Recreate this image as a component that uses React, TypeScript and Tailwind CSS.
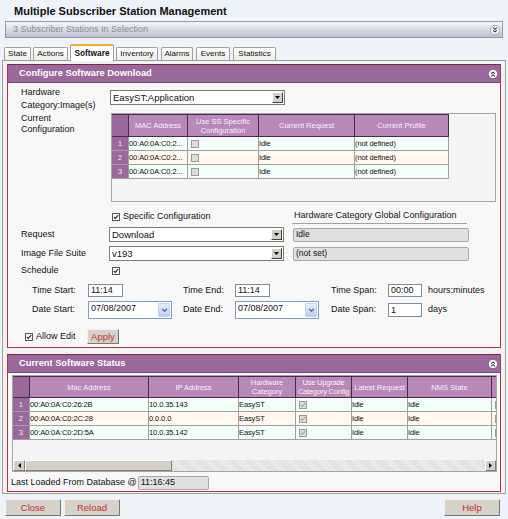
import React from 'react';

function Collapse({ down }: { down?: boolean }) {
  return (
    <svg viewBox="0 0 10 10" className="h-[10px] w-[10px] shrink-0">
      <circle cx="5" cy="5" r="4.6" fill={down ? '#f4f4f8' : '#fff'} stroke={down ? '#8a8a9a' : '#6a4a6a'} strokeWidth="0.6" />
      <path
        d={down ? 'M3.1 2.7 L5 4.3 L6.9 2.7 M3.1 5.3 L5 6.9 L6.9 5.3' : 'M3.1 4.7 L5 3.1 L6.9 4.7 M3.1 7.3 L5 5.7 L6.9 7.3'}
        fill="none"
        stroke="#333"
        strokeWidth="1.1"
      />
    </svg>
  );
}

function Check({ checked, disabled }: { checked?: boolean; disabled?: boolean }) {
  return (
    <span
      className={`flex h-[8px] w-[8px] shrink-0 items-center justify-center border ${
        disabled ? 'border-[#9a9a9a] bg-[#dcdcdc]' : 'border-[#555] bg-white'
      }`}
    >
      {checked && (
        <svg viewBox="0 0 8 8" className="h-[6px] w-[6px]">
          <path d="M1 3.8 L3 6 L7 1.6" fill="none" stroke={disabled ? '#a4a4a4' : '#222'} strokeWidth="1.5" />
        </svg>
      )}
    </span>
  );
}

function Select({ value, className }: { value: string; className: string }) {
  return (
    <div className={`flex items-center justify-between border border-[#7a7a7a] bg-white pl-[2px] ${className}`}>
      <span className="text-[9.5px] leading-none">{value}</span>
      <span className="mr-[1px] flex h-[11px] w-[11px] items-center justify-center border border-t-white border-l-white border-b-[#404040] border-r-[#404040] bg-[#d4d0c8]">
        <svg viewBox="0 0 5 3" className="h-[3px] w-[5px]">
          <path d="M0 0h5L2.5 3z" fill="#000" />
        </svg>
      </span>
    </div>
  );
}

function ReadOnly({ value, className }: { value: string; className: string }) {
  return (
    <div className={`flex items-center rounded-[2px] border border-[#a8a8a8] bg-[#e0e0e0] pl-[2px] leading-none ${className}`}>
      {value}
    </div>
  );
}

function Input({ value, className }: { value: string; className: string }) {
  return (
    <div className={`flex items-center border border-[#7f8c9c] bg-white pl-[2px] text-[9px] leading-none ${className}`}>
      {value}
    </div>
  );
}

function DateCombo({ value }: { value: string }) {
  return (
    <div className="flex h-[18px] w-[84px] justify-between border border-[#7f9db9] bg-white pl-[2px]">
      <span className="pt-[2px] text-[9px] leading-none">{value}</span>
      <span className="m-[1px] flex w-[12px] items-center justify-center rounded-[1px] border border-[#c0d0f0] bg-gradient-to-b from-[#e4eefd] to-[#b8cdf4]">
        <svg viewBox="0 0 8 5" className="h-[4px] w-[7px]">
          <path d="M1 1 L4 4 L7 1" fill="none" stroke="#4d6185" strokeWidth="1.5" />
        </svg>
      </span>
    </div>
  );
}

function Button({ label, className }: { label: string; className: string }) {
  return (
    <div
      className={`flex items-center justify-center border border-t-[#f4f2ee] border-l-[#f4f2ee] border-b-[#7a7670] border-r-[#7a7670] bg-[#d6d2ca] text-[9.5px] leading-none text-[#c0302c] ${className}`}
    >
      {label}
    </div>
  );
}

function SectionHeader({ title }: { title: string }) {
  return (
    <div className="flex h-[18px] shrink-0 items-center justify-between border-b border-[#7a4a7a] bg-[#9a689a] pl-[11px] pr-[2px]">
      <span className="text-[9.3px] font-bold leading-none text-white">{title}</span>
      <Collapse />
    </div>
  );
}

const rowBg = ['bg-[#f2fff8]', 'bg-[#fff8ee]', 'bg-[#f2fff8]'];

function Th({ className, children }: { className: string; children: React.ReactNode }) {
  return (
    <div className={`flex shrink-0 items-center justify-center overflow-hidden whitespace-nowrap border-l border-[#4a2a4a] bg-[#b888b8] text-center text-[7.5px] leading-[9px] text-[#fbeefb] ${className}`}>
      {children}
    </div>
  );
}

function Td({ className, children }: { className: string; children?: React.ReactNode }) {
  return (
    <div className={`flex shrink-0 items-center overflow-hidden whitespace-nowrap border-l border-[#a0a0a0] text-[7.5px] leading-none tracking-[-0.1px] ${className}`}>
      {children}
    </div>
  );
}

function NumCell({ n }: { n: number }) {
  return (
    <div className="flex w-[16px] shrink-0 items-center justify-center bg-[#9a689a] text-[8px] leading-none text-[#f4e4f4]">{n}</div>
  );
}

function ConfigTable() {
  const rows = [1, 2, 3];
  return (
    <div className="h-[89px] w-[385px] border border-[#a4a4a4] bg-[#f4f4f4]">
      <div className="w-[337px]">
        <div className="flex h-[23px] border-t border-b border-[#4a2a4a]">
          <div className="w-[16px] shrink-0 bg-[#9a689a]" />
          <Th className="w-[59px]">MAC Address</Th>
          <Th className="w-[71px]">Use SS Specific<br />Configuration</Th>
          <Th className="w-[96px]">Current Request</Th>
          <Th className="w-[95px] border-r">Current Profile</Th>
        </div>
        {rows.map((n, i) => (
          <div key={n} className={`flex h-[14px] border-b border-[#a0a0a0] ${rowBg[i]}`}>
            <NumCell n={n} />
            <Td className="w-[59px] border-[#4a2a4a]">00:A0:0A:C0:2...</Td>
            <Td className="w-[71px] pl-[3px]"><Check disabled /></Td>
            <Td className="w-[96px]">Idle</Td>
            <Td className="w-[95px] border-r">(not defined)</Td>
          </div>
        ))}
      </div>
    </div>
  );
}

function StatusTable() {
  const rows = [
    ['00:A0:0A:C0:26:2B', '10.0.35.143'],
    ['00:A0:0A:C0:2C:28', '0.0.0.0'],
    ['00:A0:0A:C0:2D:5A', '10.0.35.142'],
  ];
  return (
    <div className="ml-[4px] flex h-[97px] w-[485px] flex-col overflow-hidden border border-[#a4a4a4] bg-[#f4f4f4]">
      <div className="w-[518px]">
        <div className="flex h-[22px] border-t border-b border-[#4a2a4a]">
          <div className="w-[16px] shrink-0 bg-[#9a689a]" />
          <Th className="w-[119px]">Mac Address</Th>
          <Th className="w-[90px]">IP Address</Th>
          <Th className="w-[57px]">Hardware<br />Category</Th>
          <Th className="w-[56px] tracking-[-0.2px]">Use Upgrade<br />Category Config</Th>
          <Th className="w-[56px]">Latest Request</Th>
          <Th className="w-[84px]">NMS State</Th>
          <Th className="w-[40px]">{' '}</Th>
        </div>
        {rows.map(([mac, ip], i) => (
          <div key={mac} className={`flex h-[14px] border-b border-[#a0a0a0] ${rowBg[i]}`}>
            <NumCell n={i + 1} />
            <Td className="w-[119px] border-[#4a2a4a]">{mac}</Td>
            <Td className="w-[90px]">{ip}</Td>
            <Td className="w-[57px]">EasyST</Td>
            <Td className="w-[56px] pl-[3px]"><Check checked disabled /></Td>
            <Td className="w-[56px]">Idle</Td>
            <Td className="w-[84px]">Idle</Td>
            <Td className="w-[40px] pl-[3px]"><Check disabled /></Td>
          </div>
        ))}
      </div>
      <div className="flex-1" />
      <div className="flex h-[11px] shrink-0 bg-[#e6e6e6]">
        <div className="flex w-[12px] items-center justify-center border border-t-white border-l-white border-b-[#808080] border-r-[#808080] bg-[#d4d0c8]">
          <svg viewBox="0 0 3 5" className="h-[5px] w-[3px]"><path d="M3 0v5L0 2.5z" fill="#000" /></svg>
        </div>
        <div className="w-[147px] border border-t-white border-l-white border-b-[#808080] border-r-[#808080] bg-[#d4d0c8]" />
        <div className="flex-1 bg-[repeating-linear-gradient(45deg,#dcdcdc_0px,#dcdcdc_1px,#efefef_1px,#efefef_2px)]" />
        <div className="flex w-[11px] items-center justify-center border border-t-white border-l-white border-b-[#808080] border-r-[#808080] bg-[#d4d0c8]">
          <svg viewBox="0 0 3 5" className="h-[5px] w-[3px]"><path d="M0 0v5L3 2.5z" fill="#000" /></svg>
        </div>
      </div>
    </div>
  );
}

const tabs: [string, string][] = [
  ['State', 'w-[27px]'],
  ['Actions', 'ml-[2px] w-[35px]'],
  ['Software', 'ml-[2px] w-[44px]'],
  ['Inventory', 'ml-[2px] w-[42px]'],
  ['Alarms', 'ml-[3px] w-[32px]'],
  ['Events', 'ml-[3px] w-[34px]'],
  ['Statistics', 'ml-[3px] w-[43px]'],
];

export default function App() {
  return (
    <div className="flex h-[519px] w-[508px] flex-col overflow-hidden bg-[#eef3f9] font-['Liberation_Sans',Arial,sans-serif] text-[#111]">
      <div className="h-[21px] shrink-0 pl-[14px] pt-[5px] text-[11px] font-bold leading-[12px]">
        Multiple Subscriber Station Management
      </div>
      <div className="mx-[5px] flex h-[17px] shrink-0 items-center justify-between border border-[#9898a8] bg-gradient-to-b from-[#f6f6fa] to-[#bebed0] pl-[7px] pr-[2px]">
        <span className="text-[9px] leading-none text-[#8a8a8a]">3 Subscriber Stations In Selection</span>
        <Collapse down />
      </div>

      <div className="mt-[6px] flex h-[16px] shrink-0 items-end pl-[4px]">
        {tabs.map(([t, w]) =>
          t === 'Software' ? (
            <div
              key={t}
              className={`relative z-10 -mb-px flex h-[17px] items-center justify-center rounded-t-[2px] border border-b-0 border-[#a0a0a0] border-t-2 border-t-[#f0a838] bg-white text-[8.3px] font-bold leading-none ${w}`}
            >
              {t}
            </div>
          ) : (
            <div
              key={t}
              className={`flex h-[13px] items-center justify-center rounded-t-[2px] border border-b-0 border-[#a0a0a0] bg-gradient-to-b from-white to-[#ecece6] text-[8.1px] leading-none ${w}`}
            >
              {t}
            </div>
          )
        )}
      </div>

      <div className="mx-[2px] flex h-[434px] shrink-0 flex-col border border-[#a0a0a0] bg-[#f2f2f2] px-[4px] pb-[1px] pt-[3px]">
        <div className="flex h-[284px] shrink-0 flex-col border border-[#a83848] border-t-[#7a2a40] bg-[#f7f7f7]">
          <SectionHeader title="Configure Software Download" />
          <div className="flex flex-1 flex-col overflow-hidden pl-[13px] text-[9px]">
            <div className="mt-[3px] flex h-[25px]">
              <div className="w-[89px] shrink-0 leading-[12.5px]">Hardware<br />Category:Image(s)</div>
              <Select value="EasyST:Application" className="mt-[4px] h-[15px] w-[175px]" />
            </div>
            <div className="mt-[2px] flex h-[89px]">
              <div className="w-[90px] shrink-0 leading-[11px]">Current<br />Configuration</div>
              <ConfigTable />
            </div>
            <div className="mt-[7px] flex h-[15px] items-start">
              <div className="w-[91px] shrink-0" />
              <div className="flex w-[180px] shrink-0 items-center gap-[3px] pt-[3px]">
                <Check checked />
                <span className="leading-none">Specific Configuration</span>
              </div>
              <div className="h-[15px] w-[175px] border-b border-[#a0a0a0] pl-[2px] pt-[2px] leading-none">
                Hardware Category Global Configuration
              </div>
            </div>
            <div className="mt-[3px] flex h-[15px] items-center">
              <div className="w-[88px] shrink-0">Request</div>
              <Select value="Download" className="h-[15px] w-[175px]" />
              <ReadOnly value="Idle" className="ml-[9px] h-[14px] w-[176px] text-[8.5px]" />
            </div>
            <div className="mt-[4px] flex h-[15px] items-center">
              <div className="w-[88px] shrink-0">Image File Suite</div>
              <Select value="v193" className="h-[15px] w-[175px]" />
              <ReadOnly value="(not set)" className="ml-[9px] h-[14px] w-[176px] text-[8.5px]" />
            </div>
            <div className="mt-[3px] flex h-[13px] items-center">
              <div className="w-[91px] shrink-0">Schedule</div>
              <Check checked />
            </div>
            <div className="mt-[7px] flex h-[13px] items-center pl-[11px]">
              <div className="w-[56px] shrink-0">Time Start:</div>
              <Input value="11:14" className="h-[13px] w-[35px]" />
              <div className="w-[60px] shrink-0" />
              <div className="w-[52px] shrink-0">Time End:</div>
              <Input value="11:14" className="h-[13px] w-[35px]" />
              <div className="w-[61px] shrink-0" />
              <div className="w-[57px] shrink-0">Time Span:</div>
              <Input value="00:00" className="h-[13px] w-[34px]" />
              <span className="ml-[6px]">hours:minutes</span>
            </div>
            <div className="mt-[4px] flex h-[18px] items-center pl-[11px]">
              <div className="w-[56px] shrink-0">Date Start:</div>
              <DateCombo value="07/08/2007" />
              <div className="w-[11px] shrink-0" />
              <div className="w-[52px] shrink-0">Date End:</div>
              <DateCombo value="07/08/2007" />
              <div className="w-[12px] shrink-0" />
              <div className="w-[57px] shrink-0">Date Span:</div>
              <Input value="1" className="h-[14px] w-[34px]" />
              <span className="ml-[6px]">days</span>
            </div>
            <div className="mt-[10px] flex h-[15px] items-center pl-[4px]">
              <Check checked />
              <span className="ml-[3px] w-[51px] shrink-0">Allow Edit</span>
              <Button label="Apply" className="h-[15px] w-[32px]" />
            </div>
          </div>
        </div>

        <div className="mt-[6px] flex h-[138px] shrink-0 flex-col border border-[#a83848] border-t-[#7a2a40] bg-[#f7f7f7]">
          <SectionHeader title="Current Software Status" />
          <div className="mt-[2px]">
            <StatusTable />
          </div>
          <div className="mt-[3px] flex h-[15px] items-center pl-[3px] text-[9px]">
            <span>Last Loaded From Database @</span>
            <ReadOnly value="11:16:45" className="ml-[1px] h-[14px] w-[71px] text-[9px]" />
          </div>
        </div>
      </div>

      <div className="mt-[5px] flex h-[17px] shrink-0 pl-[5px] pr-[8px]">
        <Button label="Close" className="h-[17px] w-[56px]" />
        <Button label="Reload" className="ml-[3px] h-[17px] w-[56px]" />
        <div className="flex-1" />
        <Button label="Help" className="h-[17px] w-[56px]" />
      </div>
    </div>
  );
}
